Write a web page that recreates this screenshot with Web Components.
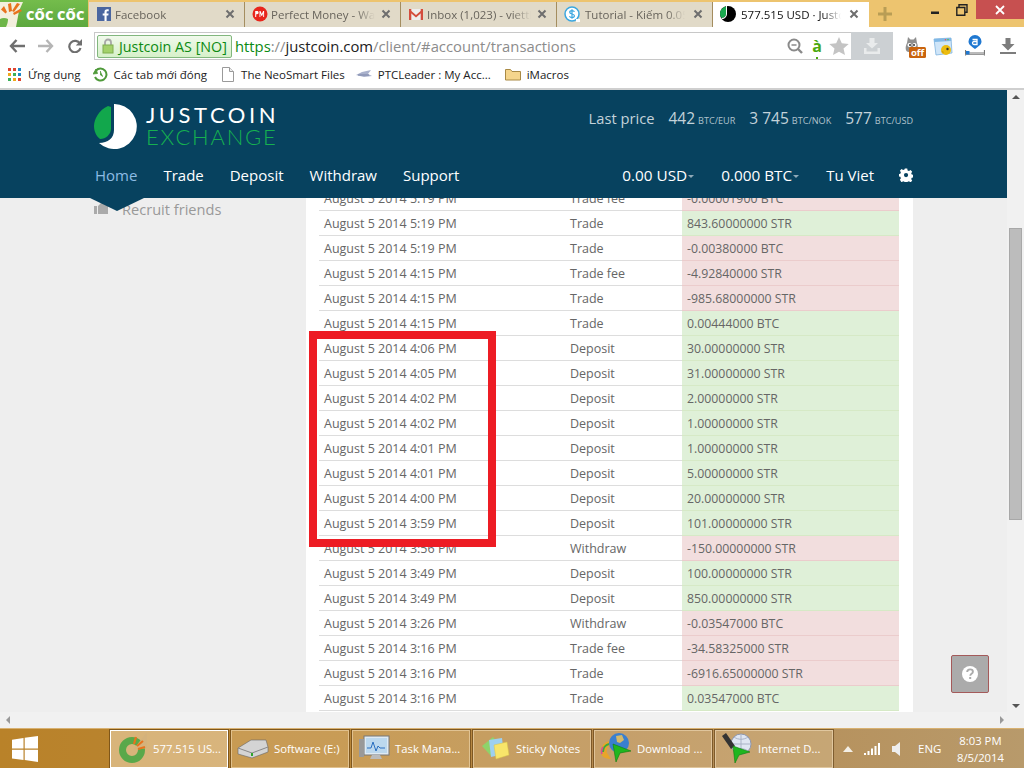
<!DOCTYPE html>
<html><head><meta charset="utf-8"><style>
html,body{margin:0;padding:0;width:1024px;height:768px;overflow:hidden;background:#eee;font-family:"Open Sans",sans-serif}
</style></head><body>
<x-app></x-app>
<script>
const def=(name,html)=>{customElements.define(name,class extends HTMLElement{connectedCallback(){if(this.shadowRoot)return;const s=this.attachShadow({mode:'open'});s.innerHTML=typeof html==='function'?html(this):html;}})};

const icons={
fb:`<svg width="14" height="14" viewBox="0 0 14 14"><rect width="14" height="14" fill="#4a66a0"/><path d="M9.600 14V8.600h1.700l.3-2.100h-2V5.200c0-.6.2-1 1-1h1.100V2.300c-.2 0-.8-.1-1.600-.1-1.600 0-2.600 1-2.600 2.700v1.600H5.700v2.100h1.800V14z" fill="#fff"/></svg>`,
pm:`<svg width="16" height="16" viewBox="0 0 16 16"><circle cx="8" cy="8" r="7.500" fill="#e8261c"/><path d="M3.200 11V5h1.800c1 0 1.600.6 1.600 1.600S6 8.300 5 8.300H4.200V11zM7.500 11V5h1l1.300 3 1.300-3h1v6h-.9V7.200L10.100 10h-.6L8.400 7.200V11z" fill="#fff"/></svg>`,
gm:`<svg width="16" height="14" viewBox="0 0 16 14"><path d="M1 2h14v11H1z" fill="#eee"/><path d="M1 2h2.300v11H1zM12.700 2H15v11h-2.300z" fill="#d44d3d"/><path d="M1 2l7 6 7-6v2.600L8 10.500 1 4.600z" fill="#d44d3d"/></svg>`,
s:`<svg width="16" height="16" viewBox="0 0 16 16"><circle cx="8" cy="8" r="7" fill="#fff" stroke="#3aa7e0" stroke-width="1.500"/><path d="M10.500 5.800C10 4.900 9 4.600 8 4.600c-1.300 0-2.300.6-2.300 1.700 0 2.300 4.700 1.100 4.700 3.400 0 1.100-1.100 1.800-2.400 1.800-1.100 0-2.100-.4-2.600-1.300M8 3.200v9.600" fill="none" stroke="#3aa7e0" stroke-width="1.200"/><rect x="12" y="13" width="4" height="3" fill="#fff"/></svg>`,
jc:`<svg width="16" height="16" viewBox="0 0 16 16"><circle cx="8" cy="8" r="8" fill="#000"/><path d="M5 .800C2 1.800 0 4.700 0 7.500c0 2 .8 3.600 1.800 4.600C4 12 6 10.500 6 8V.5z" fill="#1aa94f"/><path d="M6 0h1v8c0 2.500-1.800 4.500-4.500 5.200L1.500 12C4 12 6 10.500 6 8z" fill="#fff"/></svg>`,
};

def('x-tab',t=>`<style>
:host{display:flex;align-items:center;box-sizing:border-box;width:156px;height:25px;margin-top:2px;padding:0 9px 1px 7px;background:#e1dac8;border-right:1px solid #a48d5f;font:11.500px "Open Sans",sans-serif;color:#68645c;gap:3px}
:host([active]){background:#fff;color:#111;border-right:0;padding-right:10px}
.i{width:16px;height:16px;display:flex;align-items:center;justify-content:center;flex:none}
.t{flex:1;min-width:0;white-space:nowrap;overflow:hidden;-webkit-mask-image:linear-gradient(90deg,#000 82%,transparent);mask-image:linear-gradient(90deg,#000 82%,transparent)}
.x{flex:none;width:10px;height:10px;display:block;margin-left:3px}
</style><span class="i">${icons[t.getAttribute('icon')]}</span><span class="t">${t.getAttribute('label')}</span><svg class="x" viewBox="0 0 10 10"><path d="M1.500 1.500l7 7M8.500 1.500l-7 7" stroke="#6e6e6e" stroke-width="2"/></svg>`);

def('x-tabbar',`<style>
:host{display:flex;height:27px;background:#edc46f;position:relative;box-sizing:border-box}
.logo{width:88px;height:27px;background:linear-gradient(#74bc4c,#5da83e);margin-right:1px;display:flex;align-items:center;flex:none;color:#fff;font:bold 13px "Open Sans",sans-serif;white-space:nowrap;overflow:hidden}
.logo svg{flex:none;display:block}
.logo b{margin-left:3px;letter-spacing:.1px;margin-top:3px;line-height:20px}
.plus{width:30px;display:flex;align-items:center;justify-content:center;margin-left:1px;margin-top:1px}
.sp{flex:1}
.win{display:flex;height:19px;align-items:center}
.win span{display:flex;align-items:center;justify-content:center;width:27px;height:19px}
.win span:last-child{width:48px;background:#c75050}
</style>
<div class="logo"><svg width="23" height="27" viewBox="0 0 23 27"><path d="M0 2h23l-4 9-3 16H0z" fill="#f3efdd"/><path d="M4 6l3 6-1.500 1.500L1 9.500zM11 3l1 8-3 1L8 4zM20 4l-6 8-2-1 5-8zM22 11l-8 4-1-2 7-4z" fill="#e8731d"/><path d="M0 19c2-1 5-1.500 8 0 0 3-1 6-2 8H0z" fill="#6db547"/></svg><b>CỐC CỐC</b></div>
<slot></slot>
<div class="plus"><svg width="14" height="14" viewBox="0 0 14 14"><path d="M5.500 0h3v5.500H14v3H8.500V14h-3V8.500H0v-3h5.500z" fill="#b99d55"/></svg></div>
<div class="sp"></div>
<div class="win"><span><svg width="10" height="10" viewBox="0 0 10 10"><path d="M1 6.500h8v2.500H1z" fill="#222"/></svg></span><span style="margin-right:1px"><svg width="12" height="12" viewBox="0 0 12 12"><path d="M3 3V.800h8v7.400H8.800M.8 3.500h8v7.700h-8z" fill="none" stroke="#222" stroke-width="1.400"/></svg></span><span><svg width="10" height="10" viewBox="0 0 10 10"><path d="M1 1l8 8M9 1L1 9" stroke="#fff" stroke-width="1.800"/></svg></span></div>`);

def('x-toolbar',`<style>
:host{display:flex;align-items:center;height:35px;background:#fff;box-sizing:border-box;padding-top:3px}
.nav{display:flex;width:94px;box-sizing:border-box;padding-left:9px;gap:13px;align-items:center;flex:none}
.url{width:799px;height:28px;box-sizing:border-box;border:1px solid #c8c8c8;border-right:0;display:flex;align-items:center;font:14.800px "Open Sans",sans-serif;color:#8c8c8c;white-space:nowrap;padding-left:2px;flex:none}
.chip{height:23px;width:135px;box-sizing:border-box;border:1px solid #82b77e;border-radius:2px;background:linear-gradient(#f1faec,#d6f0c9);color:#0c8a12;display:flex;align-items:center;gap:5px;padding-left:4px;font-size:14.300px;margin-right:3px;flex:none}
.h{color:#0a8a12}.d{color:#222}
.rt{margin-left:auto;display:flex;align-items:center;height:100%}
.dl{width:42px;height:28px;background:#ccd0d3;display:flex;align-items:center;justify-content:center;flex:none;margin-top:-1px}
.ext{display:flex;align-items:center;flex:1;padding-left:10px}
.ext svg{flex:none;display:block}
</style>
<div class="nav">
<svg width="16" height="14" viewBox="0 0 16 14"><path d="M7.500 1L2 7l5.500 6M2.500 7H16" fill="none" stroke="#6f6f6f" stroke-width="2.400"/></svg>
<svg width="16" height="14" viewBox="0 0 16 14"><path d="M8.500 1L14 7l-5.500 6M13.500 7H0" fill="none" stroke="#b5b5b5" stroke-width="2.400"/></svg>
<svg width="14" height="14" viewBox="0 0 14 14" style="margin-left:1px"><path d="M12 4.800A5.700 5.700 0 1 0 12.500 9" fill="none" stroke="#6f6f6f" stroke-width="2.200"/><path d="M14 0v6.500H7.800z" fill="#6f6f6f"/></svg>
</div>
<div class="url"><div class="chip"><svg width="12" height="16" viewBox="0 0 12 16"><path d="M3 7V4.500a3 3 0 0 1 6 0V7" fill="none" stroke="#a8a8a8" stroke-width="1.800"/><rect x="1" y="7" width="10" height="8" fill="#a3d16a" stroke="#7fae4f"/></svg>Justcoin AS [NO]</div><span class="h">https</span>://<span class="d">justcoin.com</span>/client/#account/transactions
<div class="rt">
<svg width="16" height="16" viewBox="0 0 16 16" style="margin-right:9px"><circle cx="7" cy="7" r="5.500" fill="none" stroke="#8a8a8a" stroke-width="2"/><path d="M11 11l4 4" stroke="#8a8a8a" stroke-width="2.400"/><path d="M4.500 7h5" stroke="#8a8a8a" stroke-width="1.500"/></svg>
<span style="color:#4aa80f;font:bold 16px/20px 'Open Sans',sans-serif;margin-right:7px;position:relative">à<i style="position:absolute;left:4px;bottom:-3px;width:2px;height:2px;background:#4aa80f"></i></span>
<svg width="20" height="18" viewBox="0 0 20 18" style="margin-right:2px"><path d="M10 0l2.800 6.300 6.900.7-5.200 4.500 1.500 6.500L10 14.700 4 18l1.500-6.500L.3 7l6.900-.7z" fill="#c4c4c4"/></svg>
<div class="dl"><svg width="18" height="16" viewBox="0 0 18 16"><path d="M6.500 0h5v5h3.500L9 10.500 3 5h3.500zM1 10h2.500v3.500h11V10H17v6H1z" fill="#e9ebec"/></svg></div>
</div></div>
<div class="ext">
<svg width="23" height="25" viewBox="0 0 23 25"><path d="M4 9l1-6 2.500 2.500h3L13 3l1 6c2 4 0 9-5 9H6C2 18 2 13 4 9z" fill="#8f8f8f"/><circle cx="6.500" cy="11" r="2" fill="#fff"/><circle cx="11.500" cy="11" r="2" fill="#fff"/><circle cx="7" cy="11" r="1" fill="#333"/><circle cx="11" cy="11" r="1" fill="#333"/><rect x="6" y="13" width="17" height="11" rx="1.500" fill="#c9640e"/><text x="14.500" y="22" font-family="Open Sans" font-weight="700" font-size="9.500" text-anchor="middle" fill="#fff">off</text></svg>
<svg width="20" height="21" viewBox="0 0 20 21" style="margin-left:7px"><path d="M1 3l17-1 1 15-16 2z" fill="#cfe5f8" stroke="#7db3de" stroke-width=".8"/><path d="M1 3l17-1 .3 3L1.300 6z" fill="#80b8e6"/><circle cx="12.500" cy="3.700" r=".8" fill="#e55"/><circle cx="15" cy="3.600" r=".8" fill="#5b5"/><circle cx="13" cy="14" r="5" fill="#ecbc10"/><path d="M11 17l-3-1 2-1z" fill="#c99a0a"/><circle cx="14.500" cy="13" r="1.200" fill="#333"/></svg>
<svg width="20" height="22" viewBox="0 0 20 22" style="margin-left:12px"><path d="M10 14C6 11 3.500 9.500 3.500 6.500a6.500 6.500 0 0 1 13 0C16.500 9.500 14 11 10 14z" fill="#1f78d1"/><path d="M7.500 4.500h4.500v5h-3a1.500 1.500 0 0 1 0-3h3" fill="none" stroke="#fff" stroke-width="1.300"/><path d="M.5 15v5.500M19.500 15v5.500M.5 18h19.500" stroke="#777" stroke-width="1.200"/><path d="M.5 19.500h19" stroke="#999"/><rect x="1" y="16" width="3.500" height="3.500" fill="#1f78d1"/></svg>
<svg width="16" height="16" viewBox="0 0 16 16" style="margin-left:15px"><path d="M5.500 0h5v6h4L8 12.500 1.500 6h4zM0 14h16v2H0z" fill="#7d7d7d"/></svg>
</div>`);

def('x-bookmarks',`<style>
:host{display:flex;align-items:center;height:28px;box-sizing:border-box;background:#fff;border-bottom:2px solid #cfcfcf;padding:0 0 2px 8px;font:11.500px "Open Sans",sans-serif;color:#222;white-space:nowrap}
span{display:flex;align-items:center}
svg{display:block;flex:none}
</style>
<span><svg width="13" height="13" viewBox="0 0 13 13"><rect x="0" y="0" width="3" height="3" fill="#e0432e"/><rect x="5" y="0" width="3" height="3" fill="#e0432e"/><rect x="10" y="0" width="3" height="3" fill="#1e88c7"/><rect x="0" y="5" width="3" height="3" fill="#f0a81a"/><rect x="5" y="5" width="3" height="3" fill="#3bb05a"/><rect x="10" y="5" width="3" height="3" fill="#1e88c7"/><rect x="0" y="10" width="3" height="3" fill="#3bb05a"/><rect x="5" y="10" width="3" height="3" fill="#f0a81a"/><rect x="10" y="10" width="3" height="3" fill="#e0432e"/></svg><span style="margin-left:7px">Ứng dụng</span></span>
<span style="margin-left:12px"><svg width="15" height="15" viewBox="0 0 15 15"><path d="M3 3.500A6 6 0 1 1 2 10" fill="none" stroke="#4f9a3a" stroke-width="2"/><path d="M0 7l4.500-.5L3 2z M7.500 4v4l2.500 1.500" fill="#4f9a3a" stroke="#4f9a3a" stroke-width=".8"/></svg><span style="margin-left:6px">Các tab mới đóng</span></span>
<span style="margin-left:15px"><svg width="12" height="15" viewBox="0 0 12 15"><path d="M.5.500h7l4 4v10H.5z" fill="#fff" stroke="#9a9a9a"/><path d="M7.500.500v4h4" fill="#eee" stroke="#9a9a9a"/></svg><span style="margin-left:7px">The NeoSmart Files</span></span>
<span style="margin-left:11px"><svg width="16" height="10" viewBox="0 0 16 10"><path d="M0 6l6-3 9-2-3 4 4 2-8 1z" fill="#a9b1cc"/><path d="M2 6h11" stroke="#7a85a8"/></svg><span style="margin-left:6px">PTCLeader : My Acc...</span></span>
<span style="margin-left:14px"><svg width="16" height="13" viewBox="0 0 16 13"><path d="M.5 12V1.500h5l1.500 2h8.500V12z" fill="#f5d58c" stroke="#a98a45"/></svg><span style="margin-left:6px">iMacros</span></span>`);

def('x-logo',`<style>:host{display:flex;align-items:flex-start;width:190px;height:45px}
.w{margin-left:7px;display:flex;flex-direction:column;font-family:Lato,"Open Sans",sans-serif;line-height:22px}
.a{color:#fff;font-size:22px;letter-spacing:3.550px;font-weight:400;white-space:nowrap}
.b{color:#16b050;font-size:22px;letter-spacing:1.800px;font-weight:300;white-space:nowrap}
svg{flex:none;display:block}
</style><svg width="45" height="45" viewBox="0 0 45 45"><path d="M14 2C5 6 0 15 0 22c0 5 2 10 6 13 6 0 11-5 11-10V3z" fill="#12a74c"/><path d="M20 0a22.500 22.500 0 1 1-15 39C14 39 20 34 20 26z" fill="#fff"/></svg><div class="w"><span class="a">JUSTCOIN</span><span class="b">EXCHANGE</span></div>`);

def('x-price',t=>`<style>:host{display:inline-flex;align-items:baseline;gap:3px;color:#c3d2da;white-space:nowrap}
b{font-weight:400;font-size:15.500px}small{font-size:9.100px;color:#b0c3cd}</style><b>${t.getAttribute('v')}</b><small>${t.getAttribute('u')}</small>`);

def('x-balance',t=>`<style>:host{display:inline-flex;align-items:center;color:#fff;font-size:15.300px;white-space:nowrap}
i{display:block;width:0;height:0;border:3px solid transparent;border-top-color:#8fa9b8;border-bottom:0;margin:3px 0 0 1px}</style>${t.getAttribute('v')}<i></i>`);

def('x-header',`<style>
:host{display:block;background:#07425f;height:108px;box-sizing:border-box;padding:14px 94px 0 94px;font-family:"Open Sans",sans-serif;position:relative;z-index:2}
.top{display:flex;justify-content:space-between;height:45px}
.prices{display:flex;align-items:center;height:27px;gap:14px}
.lp{color:#c3d2da;font-size:14.700px}
nav{display:flex;align-items:center;justify-content:space-between;height:28px;margin-top:12px}
nav div{display:flex;align-items:center;color:#fff;font-size:15px;white-space:nowrap}
.home{color:#8dbce4}
.tri{position:absolute;left:90px;top:100%;width:54px;height:14px;overflow:hidden}
.tri i{display:block;width:0;height:0;border-left:27px solid transparent;border-right:27px solid transparent;border-top:13px solid #07425f}
.nl{gap:26px}
</style>
<div class="top"><x-logo></x-logo><div class="prices"><span class="lp">Last price</span><x-price v="442" u="BTC/EUR"></x-price><x-price v="3 745" u="BTC/NOK"></x-price><x-price v="577" u="BTC/USD"></x-price></div></div>
<nav><div class="nl" style="margin-left:1px"><span class="home">Home</span><span>Trade</span><span>Deposit</span><span>Withdraw</span><span>Support</span></div>
<div><x-balance v="0.00 USD"></x-balance><x-balance v="0.000 BTC" style="margin-left:27px"></x-balance><span style="margin-left:27px">Tu Viet</span><svg width="14" height="14" viewBox="0 0 14 14" style="margin-left:25px"><path d="M5.700 0h2.600l.4 2 1.500.6 1.700-1.100 1.800 1.800-1.100 1.700.6 1.500 2 .4v2.600l-2 .4-.6 1.500 1.100 1.700-1.800 1.800-1.700-1.100-1.500.6-.4 2H5.700l-.4-2-1.500-.6-1.700 1.100L.3 12.100l1.100-1.700-.6-1.500-2-.4V5.900l2-.4.6-1.500L.3 2.300 2.100.5l1.700 1.100 1.500-.6zM7 4.700a2.300 2.300 0 1 0 0 4.600 2.300 2.300 0 0 0 0-4.600z" fill="#fff" fill-rule="evenodd" transform="translate(.6 .6) scale(.92)"/></svg></div></nav>
<div class="tri"><i></i></div>`);

def('x-row',t=>{const k=t.getAttribute('k');return `<style>
:host{display:grid;grid-template-columns:251px 112px 217px;height:25px;box-sizing:border-box;font:12.500px/25px "Open Sans",sans-serif;color:#666;border-bottom:1px solid #ddd;white-space:nowrap}
span{height:24px}
.d{padding-left:5px}.a{padding-left:5px;font-size:12.300px;background:${k==='p'?'#dff0d8':'#f2dede'};box-shadow:0 1px 0 ${k==='p'?'#d6e9c6':'#ebcccc'}}
</style><span class="d">August 5 2014 ${t.getAttribute('t')}</span><span>${t.getAttribute('y')}</span><span class="a">${t.getAttribute('v')}</span>`});

def('x-table',`<style>:host{display:block;position:relative;width:580px}
.mark{position:absolute;left:-10px;top:145px;width:187px;height:216px;box-sizing:border-box;border:8px solid #ed1c24}
</style><slot></slot><div class="mark"></div>`);

def('x-page',`<style>
:host{display:flex;flex:1;min-height:0;background:#eee;overflow:hidden;position:relative}
.side{width:306px;flex:none;box-sizing:border-box;padding:1px 0 0 94px;display:flex;align-items:flex-start;gap:14px;color:#999;font:14.600px/20px "Open Sans",sans-serif}
.side svg{margin-top:4px;flex:none}
.main{width:607px;flex:none;background:#fff;box-sizing:border-box;padding:0 14px 0 13px;overflow:hidden}
.main ::slotted(x-table){margin-top:-12px}
.help{position:absolute;left:951px;top:457px;width:38px;height:38px;box-sizing:border-box;background:#ababab;border:1px solid #a45a5a;border-radius:2px;display:flex;align-items:center;justify-content:center}
</style>
<div class="side"><svg width="14" height="12" viewBox="0 0 14 12"><rect x="0" y="3" width="3" height="8" fill="#aaa"/><path d="M4 3l3-3h3l1 2h3v9H4z" fill="#aaa"/></svg><span>Recruit friends</span></div>
<div class="main"><slot></slot></div>
<div class="help"><svg width="18" height="18" viewBox="0 0 18 18"><circle cx="9" cy="9" r="8" fill="#fff"/><path d="M6.200 7c0-1.700 1.300-2.600 2.900-2.600s2.800.9 2.800 2.300c0 2.200-2.600 2-2.600 4" fill="none" stroke="#ababab" stroke-width="1.900"/><rect x="8.200" y="12" width="2" height="2" fill="#ababab"/></svg></div>`);

def('x-vscroll',`<style>:host{display:block;width:17px;flex:none;background:#f1f1f1;position:relative}
.t{position:absolute;left:2px;top:138px;width:13px;height:292px;background:#bcbcbc;border:1px solid #a8a8a8;box-sizing:border-box}
.u,.d{position:absolute;left:5px;width:0;height:0;border:4px solid transparent}
.u{top:5px;border-top:0;border-bottom-color:#555}.d{bottom:4px;border-bottom:0;border-top-color:#555}
</style><i class="u"></i><div class="t"></div><i class="d"></i>`);

def('x-hscroll',`<style>:host{display:flex;align-items:center;justify-content:space-between;height:16px;background:#f1f1f1;padding:0 20px 0 6px}
i{display:block;width:0;height:0;border:4px solid transparent}
.l{border-left:0;border-right-color:#999}.r{border-right:0;border-left-color:#999}</style><i class="l"></i><i class="r"></i>`);

def('x-task',t=>`<style>
:host{display:flex;align-items:center;box-sizing:border-box;width:118px;height:38px;margin-top:1px;padding:0 0 2px 5px;border:1px solid rgba(255,240,210,.45);background:rgba(255,235,200,.22);color:#fff;font:11.300px "Open Sans",sans-serif;white-space:nowrap;gap:5px;overflow:hidden;box-shadow:0 0 0 1px rgba(80,50,10,.55)}
:host([active]){background:rgba(255,240,215,.45);border:1px solid #fff}
.i{width:32px;height:32px;flex:none;display:flex;align-items:center;justify-content:center}
</style><span class="i"><slot></slot></span><span>${t.getAttribute('label')}</span>`);

def('x-taskbar',`<style>
:host{display:flex;height:40px;background:linear-gradient(90deg,#b98229 0,#b98638 35%,#b58a50 60%,#b89a6b 100%);box-sizing:border-box;align-items:flex-start;border-top:1px solid #d8b171;color:#fff;font:11.500px "Open Sans",sans-serif}
.st{width:110px;height:39px;display:flex;align-items:center;padding-left:12px;box-sizing:border-box;flex:none}
.ts{display:flex;gap:3px;flex:none}
.tray{display:flex;align-items:center;height:39px;flex:1;padding-left:10px}
.ck{margin-left:auto;margin-right:20px;text-align:center;line-height:17px;font-size:11.300px;white-space:nowrap}
svg{display:block;flex:none}
</style>
<div class="st"><svg width="26" height="26" viewBox="0 0 26 26"><path d="M0 3.700L11.500 2v10.500H0zM12.700 1.800L26 0v12.500H12.700zM0 13.700h11.500V24L0 22.400zM12.700 13.700H26V26l-13.300-1.900z" fill="#fff"/></svg></div>
<div class="ts"><slot></slot></div>
<div class="tray"><svg width="10" height="6" viewBox="0 0 10 6"><path d="M5 0l5 6H0z" fill="#f3efe6"/></svg><svg width="16" height="12" viewBox="0 0 16 12" style="margin-left:11px"><path d="M0 10h2v2H0zM3.500 8h2v4h-2zM7 5.500h2V12H7zM10.500 3h2v9h-2zM14 0h2v12h-2z" fill="#fff"/></svg><svg width="10" height="14" viewBox="0 0 10 14" style="margin-left:12px"><path d="M0 4h3l5-4v14l-5-4H0z" fill="#eee"/></svg><span style="margin-left:16px">ENG</span><div class="ck">8:03 PM<br>8/5/2014</div></div>`);

def('x-app',`<style>:host{display:flex;flex-direction:column;width:1024px;height:768px;overflow:hidden}
.mid{display:flex;flex:1;min-height:0}
.col{display:flex;flex-direction:column;width:1007px;flex:none}
</style><x-tabbar>
<x-tab icon="fb" label="Facebook"></x-tab><x-tab icon="pm" label="Perfect Money - Wa"></x-tab><x-tab icon="gm" label="Inbox (1,023) - viettl"></x-tab><x-tab icon="s" label="Tutorial - Kiếm 0.05" style="gap:5px"></x-tab><x-tab icon="jc" label="577.515 USD · Justco" active style="gap:5px"></x-tab>
</x-tabbar><x-toolbar></x-toolbar><x-bookmarks></x-bookmarks>
<div class="mid"><div class="col"><x-header></x-header><x-page id="p"></x-page></div><x-vscroll></x-vscroll></div><x-hscroll></x-hscroll>
<x-taskbar id="tb"></x-taskbar>`);

const rows=[['5:19 PM','Trade fee','-0.00001900 BTC','n'],['5:19 PM','Trade','843.60000000 STR','p'],['5:19 PM','Trade','-0.00380000 BTC','n'],['4:15 PM','Trade fee','-4.92840000 STR','n'],['4:15 PM','Trade','-985.68000000 STR','n'],['4:15 PM','Trade','0.00444000 BTC','p'],['4:06 PM','Deposit','30.00000000 STR','p'],['4:05 PM','Deposit','31.00000000 STR','p'],['4:02 PM','Deposit','2.00000000 STR','p'],['4:02 PM','Deposit','1.00000000 STR','p'],['4:01 PM','Deposit','1.00000000 STR','p'],['4:01 PM','Deposit','5.00000000 STR','p'],['4:00 PM','Deposit','20.00000000 STR','p'],['3:59 PM','Deposit','101.00000000 STR','p'],['3:56 PM','Withdraw','-150.00000000 STR','n'],['3:49 PM','Deposit','100.00000000 STR','p'],['3:49 PM','Deposit','850.00000000 STR','p'],['3:26 PM','Withdraw','-0.03547000 BTC','n'],['3:16 PM','Trade fee','-34.58325000 STR','n'],['3:16 PM','Trade','-6916.65000000 STR','n'],['3:16 PM','Trade','0.03547000 BTC','p']];
const app=document.querySelector('x-app');
const p=app.shadowRoot.getElementById('p');
p.innerHTML='<x-table>'+rows.map(r=>`<x-row t="${r[0]}" y="${r[1]}" v="${r[2]}" k="${r[3]}"></x-row>`).join('')+'</x-table>';
const tb=app.shadowRoot.getElementById('tb');
tb.innerHTML=`
<x-task label="577.515 US..." active><svg width="32" height="32" viewBox="0 0 32 32"><circle cx="16" cy="18" r="9.500" fill="none" stroke="#5aa84a" stroke-width="7"/><path d="M17 18L31 0v16z" fill="#d4b27c"/><path d="M18 12l2-7M21 14l6-5M22 17l7-2" stroke="#e8731d" stroke-width="2.200"/></svg></x-task>
<x-task label="Software (E:)"><svg width="32" height="22" viewBox="0 0 32 22"><path d="M1 11L14 3h15l2 7v5L15 21 1 17z" fill="#d4d4d4" stroke="#666" stroke-width=".6"/><path d="M1 11l14 5 16-6" fill="none" stroke="#888"/><rect x="14" y="16" width="2" height="3" fill="#2ea52e"/></svg></x-task>
<x-task label="Task Mana..."><svg width="32" height="30" viewBox="0 0 32 30"><rect x="6" y="3" width="25" height="19" fill="#dfeaf3" stroke="#777"/><rect x="8" y="5" width="21" height="15" fill="#bcd8ee"/><path d="M9 15h4l2-6 3 9 2-5 2 2h5" fill="none" stroke="#2a6fc0"/><path d="M14 22h8l2 4H12z" fill="#bbb"/><rect x="1" y="6" width="5" height="18" fill="#999"/></svg></x-task>
<x-task label="Sticky Notes"><svg width="30" height="28" viewBox="0 0 30 28"><path d="M2 12l11-9 8 10-10 9z" fill="#8ed36a"/><path d="M9 6l13-2 2 16-13 3z" fill="#9ed0f0"/><path d="M14 11l13-3 2 13-13 4z" fill="#f8e56a" stroke="#d8c24a" stroke-width=".5"/></svg></x-task>
<x-task label="Download ..."><svg width="32" height="32" viewBox="0 0 32 32"><path d="M1 20a10 10 0 0 1 9-11l3 3a7 7 0 0 0-6 9l4 6C6 27 1 25 1 20z" fill="#e8a52a"/><path d="M3 20a8 8 0 0 1 6-8" stroke="#3cab3c" stroke-width="2" fill="none"/><path d="M2 22a8 8 0 0 1 1-7" stroke="#d84a9a" stroke-width="1.500" fill="none"/><circle cx="19" cy="11" r="10" fill="#3a7fd0"/><path d="M16 4l6-1 2 5-4 3-3-1z" fill="#d4b96a"/><path d="M13 12l18 7-11 2-4 9z" fill="#1fb61f" stroke="#0d7d0d" stroke-width=".6"/></svg></x-task>
<x-task label="Internet D..."><svg width="32" height="32" viewBox="0 0 32 32"><circle cx="20" cy="12" r="10" fill="#dfe6f2" stroke="#8e98b0"/><path d="M20 2v20M10 12h20M13 5c4 3 10 3 14 0M13 19c4-3 10-3 14 0" stroke="#a9b2c6" fill="none"/><path d="M1 4l4-3 9 13-4 3z" fill="#333"/><path d="M12 14l17 6-11 3-4 8z" fill="#1fb61f" stroke="#0d7d0d" stroke-width=".6"/></svg></x-task>`;
</script></body></html>
